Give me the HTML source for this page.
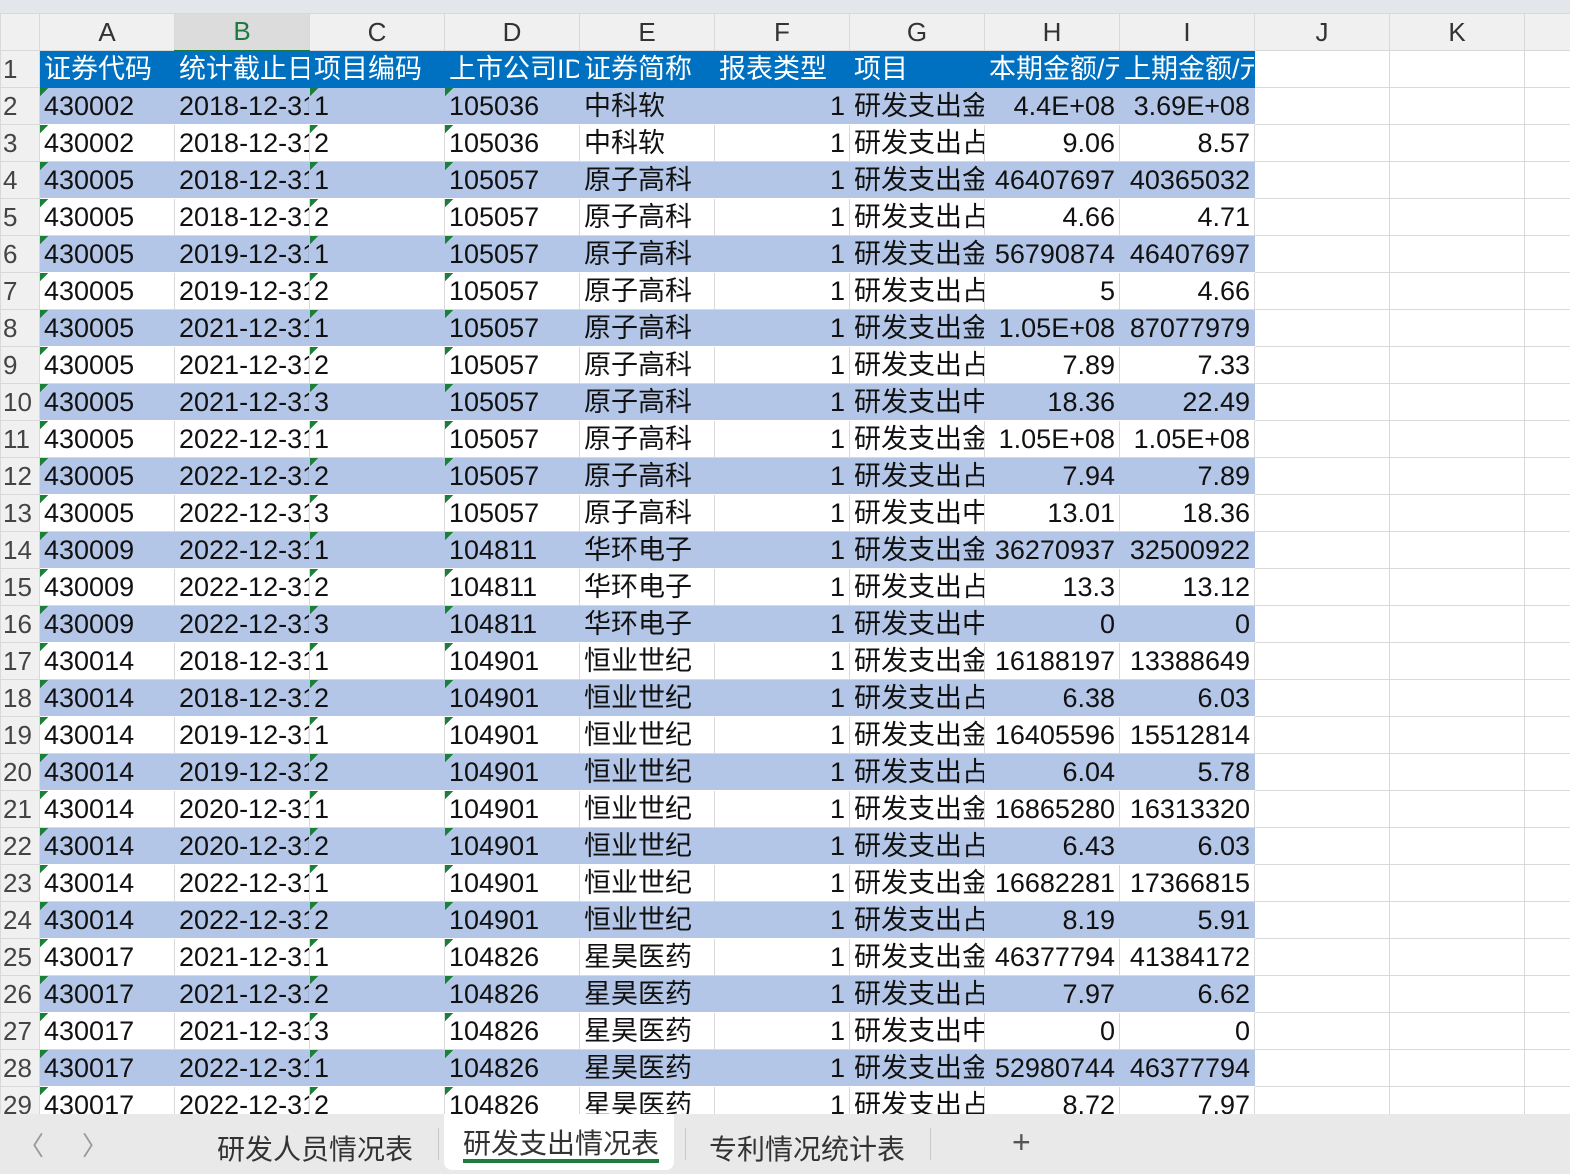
<!DOCTYPE html>
<html><head><meta charset="utf-8">
<style>
*{margin:0;padding:0;box-sizing:border-box}
body{width:1570px;height:1174px;overflow:hidden;background:#fff;font-family:"Liberation Sans","Noto Sans CJK SC",sans-serif;position:relative}
#top{position:absolute;left:0;top:0;width:1570px;height:13px;background:#e3e6ea}
table{position:absolute;left:0;top:13px;width:1570px;border-collapse:collapse;table-layout:fixed}
td{height:37px;border:1px solid #d9d9d9;font-size:27px;line-height:35px;white-space:nowrap;overflow:hidden;padding:0 4px;color:#111;vertical-align:middle}
tr.h td{background:#f0f0f0;color:#333;text-align:center;font-size:26px;height:37px;border-color:#d9d9d9}
tr.h td.sel{background:#dcdcdc;color:#1f7a40;border-bottom:2px solid #1f7a40}
td.n{background:#f0f0f0;color:#444;font-size:26px;padding:0 0 0 2px;text-align:left;overflow:visible}
tr.t td.c{background:#0070c0;color:#fff;border-color:#0070c0}
tr.b td.c{background-color:#b4c6e7;border-color:#b4c6e7}
tr.b td.c{border-bottom-color:#fff;border-top-color:#fff}
td.r{text-align:right}
td.g{background-image:linear-gradient(135deg,#1a7f37 6px,transparent 6px);background-size:10px 10px;background-repeat:no-repeat}
td.k{padding-right:0;text-overflow:clip}
#tabs{position:absolute;left:0;top:1114px;width:1570px;height:60px;background:#e9e9e9;font-size:28px;color:#333}
#tabs span{position:absolute}
.sep{position:absolute;top:14px;width:1px;height:32px;background:#c8c8c8}
</style></head><body>
<div id="top"></div>
<table>
<colgroup><col style="width:39px"><col style="width:135px"><col style="width:135px"><col style="width:135px"><col style="width:135px"><col style="width:135px"><col style="width:135px"><col style="width:135px"><col style="width:135px"><col style="width:135px"><col style="width:135px"><col style="width:135px"><col style="width:46px"></colgroup>
<tr class="h"><td class="n"></td><td>A</td><td class="sel">B</td><td>C</td><td>D</td><td>E</td><td>F</td><td>G</td><td>H</td><td>I</td><td>J</td><td>K</td><td></td></tr>
<tr class="t"><td class="n">1</td><td class="c">证券代码</td><td class="c k">统计截止日期</td><td class="c k">项目编码</td><td class="c k">上市公司ID</td><td class="c">证券简称</td><td class="c">报表类型</td><td class="c">项目</td><td class="c k">本期金额/元</td><td class="c k">上期金额/元</td><td></td><td></td><td></td></tr>
<tr class="b"><td class="n">2</td><td class="c g">430002</td><td class="c k">2018-12-31</td><td class="c g">1</td><td class="c g">105036</td><td class="c">中科软</td><td class="c r">1</td><td class="c k">研发支出金额</td><td class="c r">4.4E+08</td><td class="c r">3.69E+08</td><td></td><td></td><td></td></tr>
<tr><td class="n">3</td><td class="c g">430002</td><td class="c k">2018-12-31</td><td class="c g">2</td><td class="c g">105036</td><td class="c">中科软</td><td class="c r">1</td><td class="c k">研发支出占比</td><td class="c r">9.06</td><td class="c r">8.57</td><td></td><td></td><td></td></tr>
<tr class="b"><td class="n">4</td><td class="c g">430005</td><td class="c k">2018-12-31</td><td class="c g">1</td><td class="c g">105057</td><td class="c">原子高科</td><td class="c r">1</td><td class="c k">研发支出金额</td><td class="c r">46407697</td><td class="c r">40365032</td><td></td><td></td><td></td></tr>
<tr><td class="n">5</td><td class="c g">430005</td><td class="c k">2018-12-31</td><td class="c g">2</td><td class="c g">105057</td><td class="c">原子高科</td><td class="c r">1</td><td class="c k">研发支出占比</td><td class="c r">4.66</td><td class="c r">4.71</td><td></td><td></td><td></td></tr>
<tr class="b"><td class="n">6</td><td class="c g">430005</td><td class="c k">2019-12-31</td><td class="c g">1</td><td class="c g">105057</td><td class="c">原子高科</td><td class="c r">1</td><td class="c k">研发支出金额</td><td class="c r">56790874</td><td class="c r">46407697</td><td></td><td></td><td></td></tr>
<tr><td class="n">7</td><td class="c g">430005</td><td class="c k">2019-12-31</td><td class="c g">2</td><td class="c g">105057</td><td class="c">原子高科</td><td class="c r">1</td><td class="c k">研发支出占比</td><td class="c r">5</td><td class="c r">4.66</td><td></td><td></td><td></td></tr>
<tr class="b"><td class="n">8</td><td class="c g">430005</td><td class="c k">2021-12-31</td><td class="c g">1</td><td class="c g">105057</td><td class="c">原子高科</td><td class="c r">1</td><td class="c k">研发支出金额</td><td class="c r">1.05E+08</td><td class="c r">87077979</td><td></td><td></td><td></td></tr>
<tr><td class="n">9</td><td class="c g">430005</td><td class="c k">2021-12-31</td><td class="c g">2</td><td class="c g">105057</td><td class="c">原子高科</td><td class="c r">1</td><td class="c k">研发支出占比</td><td class="c r">7.89</td><td class="c r">7.33</td><td></td><td></td><td></td></tr>
<tr class="b"><td class="n">10</td><td class="c g">430005</td><td class="c k">2021-12-31</td><td class="c g">3</td><td class="c g">105057</td><td class="c">原子高科</td><td class="c r">1</td><td class="c k">研发支出中</td><td class="c r">18.36</td><td class="c r">22.49</td><td></td><td></td><td></td></tr>
<tr><td class="n">11</td><td class="c g">430005</td><td class="c k">2022-12-31</td><td class="c g">1</td><td class="c g">105057</td><td class="c">原子高科</td><td class="c r">1</td><td class="c k">研发支出金额</td><td class="c r">1.05E+08</td><td class="c r">1.05E+08</td><td></td><td></td><td></td></tr>
<tr class="b"><td class="n">12</td><td class="c g">430005</td><td class="c k">2022-12-31</td><td class="c g">2</td><td class="c g">105057</td><td class="c">原子高科</td><td class="c r">1</td><td class="c k">研发支出占比</td><td class="c r">7.94</td><td class="c r">7.89</td><td></td><td></td><td></td></tr>
<tr><td class="n">13</td><td class="c g">430005</td><td class="c k">2022-12-31</td><td class="c g">3</td><td class="c g">105057</td><td class="c">原子高科</td><td class="c r">1</td><td class="c k">研发支出中</td><td class="c r">13.01</td><td class="c r">18.36</td><td></td><td></td><td></td></tr>
<tr class="b"><td class="n">14</td><td class="c g">430009</td><td class="c k">2022-12-31</td><td class="c g">1</td><td class="c g">104811</td><td class="c">华环电子</td><td class="c r">1</td><td class="c k">研发支出金额</td><td class="c r">36270937</td><td class="c r">32500922</td><td></td><td></td><td></td></tr>
<tr><td class="n">15</td><td class="c g">430009</td><td class="c k">2022-12-31</td><td class="c g">2</td><td class="c g">104811</td><td class="c">华环电子</td><td class="c r">1</td><td class="c k">研发支出占比</td><td class="c r">13.3</td><td class="c r">13.12</td><td></td><td></td><td></td></tr>
<tr class="b"><td class="n">16</td><td class="c g">430009</td><td class="c k">2022-12-31</td><td class="c g">3</td><td class="c g">104811</td><td class="c">华环电子</td><td class="c r">1</td><td class="c k">研发支出中</td><td class="c r">0</td><td class="c r">0</td><td></td><td></td><td></td></tr>
<tr><td class="n">17</td><td class="c g">430014</td><td class="c k">2018-12-31</td><td class="c g">1</td><td class="c g">104901</td><td class="c">恒业世纪</td><td class="c r">1</td><td class="c k">研发支出金额</td><td class="c r">16188197</td><td class="c r">13388649</td><td></td><td></td><td></td></tr>
<tr class="b"><td class="n">18</td><td class="c g">430014</td><td class="c k">2018-12-31</td><td class="c g">2</td><td class="c g">104901</td><td class="c">恒业世纪</td><td class="c r">1</td><td class="c k">研发支出占比</td><td class="c r">6.38</td><td class="c r">6.03</td><td></td><td></td><td></td></tr>
<tr><td class="n">19</td><td class="c g">430014</td><td class="c k">2019-12-31</td><td class="c g">1</td><td class="c g">104901</td><td class="c">恒业世纪</td><td class="c r">1</td><td class="c k">研发支出金额</td><td class="c r">16405596</td><td class="c r">15512814</td><td></td><td></td><td></td></tr>
<tr class="b"><td class="n">20</td><td class="c g">430014</td><td class="c k">2019-12-31</td><td class="c g">2</td><td class="c g">104901</td><td class="c">恒业世纪</td><td class="c r">1</td><td class="c k">研发支出占比</td><td class="c r">6.04</td><td class="c r">5.78</td><td></td><td></td><td></td></tr>
<tr><td class="n">21</td><td class="c g">430014</td><td class="c k">2020-12-31</td><td class="c g">1</td><td class="c g">104901</td><td class="c">恒业世纪</td><td class="c r">1</td><td class="c k">研发支出金额</td><td class="c r">16865280</td><td class="c r">16313320</td><td></td><td></td><td></td></tr>
<tr class="b"><td class="n">22</td><td class="c g">430014</td><td class="c k">2020-12-31</td><td class="c g">2</td><td class="c g">104901</td><td class="c">恒业世纪</td><td class="c r">1</td><td class="c k">研发支出占比</td><td class="c r">6.43</td><td class="c r">6.03</td><td></td><td></td><td></td></tr>
<tr><td class="n">23</td><td class="c g">430014</td><td class="c k">2022-12-31</td><td class="c g">1</td><td class="c g">104901</td><td class="c">恒业世纪</td><td class="c r">1</td><td class="c k">研发支出金额</td><td class="c r">16682281</td><td class="c r">17366815</td><td></td><td></td><td></td></tr>
<tr class="b"><td class="n">24</td><td class="c g">430014</td><td class="c k">2022-12-31</td><td class="c g">2</td><td class="c g">104901</td><td class="c">恒业世纪</td><td class="c r">1</td><td class="c k">研发支出占比</td><td class="c r">8.19</td><td class="c r">5.91</td><td></td><td></td><td></td></tr>
<tr><td class="n">25</td><td class="c g">430017</td><td class="c k">2021-12-31</td><td class="c g">1</td><td class="c g">104826</td><td class="c">星昊医药</td><td class="c r">1</td><td class="c k">研发支出金额</td><td class="c r">46377794</td><td class="c r">41384172</td><td></td><td></td><td></td></tr>
<tr class="b"><td class="n">26</td><td class="c g">430017</td><td class="c k">2021-12-31</td><td class="c g">2</td><td class="c g">104826</td><td class="c">星昊医药</td><td class="c r">1</td><td class="c k">研发支出占比</td><td class="c r">7.97</td><td class="c r">6.62</td><td></td><td></td><td></td></tr>
<tr><td class="n">27</td><td class="c g">430017</td><td class="c k">2021-12-31</td><td class="c g">3</td><td class="c g">104826</td><td class="c">星昊医药</td><td class="c r">1</td><td class="c k">研发支出中</td><td class="c r">0</td><td class="c r">0</td><td></td><td></td><td></td></tr>
<tr class="b"><td class="n">28</td><td class="c g">430017</td><td class="c k">2022-12-31</td><td class="c g">1</td><td class="c g">104826</td><td class="c">星昊医药</td><td class="c r">1</td><td class="c k">研发支出金额</td><td class="c r">52980744</td><td class="c r">46377794</td><td></td><td></td><td></td></tr>
<tr><td class="n">29</td><td class="c g">430017</td><td class="c k">2022-12-31</td><td class="c g">2</td><td class="c g">104826</td><td class="c">星昊医药</td><td class="c r">1</td><td class="c k">研发支出占比</td><td class="c r">8.72</td><td class="c r">7.97</td><td></td><td></td><td></td></tr>
</table>
<div id="tabs">
<span style="left:18px;top:12px;color:#999;font-size:26px">〈</span>
<span style="left:82px;top:12px;color:#999;font-size:26px">〉</span>
<span style="left:217px;top:14px">研发人员情况表</span>
<div class="sep" style="left:438px"></div>
<div style="position:absolute;left:444px;top:0;width:230px;height:56px;background:#fff;border-radius:0 0 8px 8px"></div>
<span style="left:463px;top:8px">研发支出情况表</span>
<div style="position:absolute;left:463px;top:45px;width:196px;height:4px;background:#1f7a40"></div>
<div class="sep" style="left:685px"></div>
<span style="left:709px;top:14px">专利情况统计表</span>
<div class="sep" style="left:930px"></div>
<span style="left:1012px;top:10px;font-size:32px;color:#555">+</span>
</div>
</body></html>
